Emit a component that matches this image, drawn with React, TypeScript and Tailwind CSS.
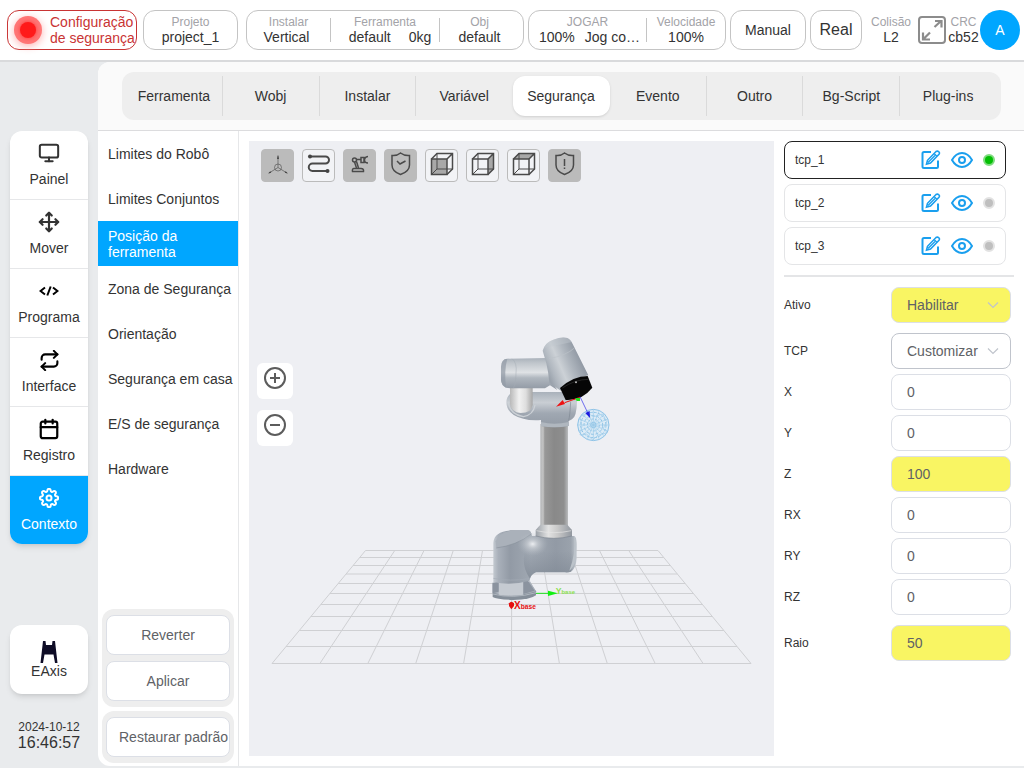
import { useState } from "react"
import type { ReactNode } from "react"
import { FiCalendar, FiMonitor, FiMove, FiRepeat, FiSettings } from "react-icons/fi"

const TABS = ["Ferramenta", "Wobj", "Instalar", "Variável", "Segurança", "Evento", "Outro", "Bg-Script", "Plug-ins"]

const SAFETY_MENU = [
  "Limites do Robô",
  "Limites Conjuntos",
  "Posição da ferramenta",
  "Zona de Segurança",
  "Orientação",
  "Segurança em casa",
  "E/S de segurança",
  "Hardware",
]

const NAV = [
  { label: "Painel", icon: <MonitorIcon /> },
  { label: "Mover", icon: <FiMove size={22} strokeWidth={2.4} /> },
  { label: "Programa", icon: <CodeIcon /> },
  { label: "Interface", icon: <FiRepeat size={21} strokeWidth={2.4} className="text-black" /> },
  { label: "Registro", icon: <FiCalendar size={22} strokeWidth={2.4} className="text-black" /> },
  { label: "Contexto", icon: <FiSettings size={20} strokeWidth={2.4} /> },
]

const POSE_FIELDS = [
  { id: "x", label: "X", value: "0", changed: false },
  { id: "y", label: "Y", value: "0", changed: false },
  { id: "z", label: "Z", value: "100", changed: true },
  { id: "rx", label: "RX", value: "0", changed: false },
  { id: "ry", label: "RY", value: "0", changed: false },
  { id: "rz", label: "RZ", value: "0", changed: false },
]

function MonitorIcon() {
  return <FiMonitor size={22} strokeWidth={2.2} />
}

function CodeIcon() {
  return (
    <svg width="20" height="12" viewBox="0 0 20 12" fill="none" stroke="#000" strokeWidth="2">
      <path d="M6 2.5 1.5 6 6 9.5M14 2.5 18.500 6 14 9.500M11.700 1.500 8.300 10.500" />
    </svg>
  )
}

function ExpandIcon() {
  return (
    <svg width="30" height="30" viewBox="0 0 30 30" fill="none" stroke="#8c8c8c" strokeWidth="2">
      <rect x="2" y="2" width="26" height="26" rx="3" />
      <path d="M17.500 12 24 6M18 6H24.500V12.500M13 17.500 6.500 24M6 17.500V24.500H13" strokeWidth="2.200" />
    </svg>
  )
}

function EditIcon() {
  return (
    <svg width="20" height="20" viewBox="0 0 20 20" fill="none" stroke="#1a9fee" strokeWidth="2">
      <path d="M10 2H3Q1.500 2 1.500 3.500V16.500Q1.500 18 3 18H15.500Q17 18 17 16.500V10.500" />
      <path d="M5.500 14.200 6.500 10.300 15 1.500Q16.500 .500 17.800 1.800 19 3 18 4.300L9.500 13Z" strokeWidth="1.600" />
      <path d="M7 12.500 14 5.500M13 3.500 16 6.300" strokeWidth="1.300" />
    </svg>
  )
}

function EyeIcon() {
  return (
    <svg width="22" height="16" viewBox="0 0 22 16" fill="none" stroke="#1a9fee" strokeWidth="2">
      <path d="M1 8Q5 1 11 1T21 8Q17 15 11 15T1 8Z" />
      <circle cx="11" cy="8" r="3" />
    </svg>
  )
}

function CubeIcon({ face }: { face: string }) {
  return (
    <>
      <path d={face} fill="#a8a8a8" stroke="none" />
      <rect x="6.500" y="10" width="15.500" height="15.500" />
      <rect x="12" y="4.500" width="15.500" height="15.500" strokeWidth="1" />
      <path d="M6.500 10 12 4.500H27.500V20L22 25.500M22 10 27.500 4.500" />
      <path d="M6.500 25.500 12 20" strokeWidth="1" />
    </>
  )
}

const SHIELD = "M16.500 4Q13 7 8 6.500V16Q8 22.500 16.500 25.500 25.500 22.500 25.500 16V6.500Q20.500 7 16.500 4Z"

const VIEW_TOOLS: { label: string; active: boolean; icon: ReactNode }[] = [
  {
    label: "Eixos",
    active: true,
    icon: (
      <g strokeWidth=".600">
        <path d="M17 18.500V7M17 18.500 8 24M17 18.500 26 24" />
        <circle cx="17" cy="18.500" r="3.500" />
        <path d="M17 5.500 18 10H16ZM7 24.500 9.300 22.300 10.300 23.800ZM27 24.500 24.700 22.300 23.700 23.800Z" fill="#444" stroke="none" />
      </g>
    ),
  },
  {
    label: "Trajetória",
    active: false,
    icon: (
      <>
        <path d="M8 7.500H23.500A3.500 3.500 0 0 1 23.500 14.500H10.500A3.700 3.700 0 0 0 10.500 22H25" strokeWidth="2" />
        <circle cx="8" cy="7.500" r="2" fill="#444" stroke="none" />
        <circle cx="25.500" cy="22" r="2" fill="#444" stroke="none" />
      </>
    ),
  },
  {
    label: "Robô",
    active: true,
    icon: (
      <>
        <path d="M9.500 22.500Q9 19.500 11 19.500H18Q21 19.500 20.500 22.500Z" />
        <circle cx="11.500" cy="11" r="2" />
        <path d="M11.500 13 13.500 19M13.500 12.500 15.500 19M13.500 10.500H18" />
        <path d="M18 8.500H21V13.500H18ZM25 7.500Q21.500 8 21.500 11T25 14" />
      </>
    ),
  },
  { label: "Zona segura", active: true, icon: <path d={SHIELD + "M13 12 16 15 21.500 12"} /> },
  { label: "Vista frontal", active: false, icon: <CubeIcon face="M6.500 10H22V25.500H6.500Z" /> },
  { label: "Vista lateral", active: false, icon: <CubeIcon face="M22 10 27.500 4.500V20L22 25.500Z" /> },
  { label: "Vista superior", active: false, icon: <CubeIcon face="M6.500 10 12 4.500H27.500L22 10Z" /> },
  { label: "Alerta", active: true, icon: <path d={SHIELD + "M16.500 10V17M16.500 18.500V20"} /> },
]

// y of every grid row, far to near
const GRID_ROWS = [550.5, 557.5, 565.5, 574, 583.5, 593.5, 604.5, 616.5, 630.5, 646.5, 663.5]

function FloorGrid() {
  const far = GRID_ROWS[0]
  const near = GRID_ROWS[10]
  return (
    <g stroke="#cfd0d3" strokeWidth="1" fill="none">
      {GRID_ROWS.map((y, i) => {
        const t = (y - far) / (near - far)
        return (
          <g key={y}>
            <line x1={365.5 - 93.5 * t} x2={658 + 93 * t} y1={y} y2={y} />
            <line x1={365.5 + 29.25 * i} y1={far} x2={272 + 47.9 * i} y2={near} />
          </g>
        )
      })}
    </g>
  )
}

function RobotArm() {
  return (
    <g transform="translate(470 320) scale(.33333)">
      <defs>
        <linearGradient id="body" x1="0" x2="1">
          <stop offset="0" stopColor="#c3c9d0" />
          <stop offset=".06" stopColor="#a9b0ba" />
          <stop offset=".2" stopColor="#929aa5" />
          <stop offset=".45" stopColor="#a0a8b2" />
          <stop offset=".75" stopColor="#929aa5" />
          <stop offset=".93" stopColor="#9aa2ac" />
          <stop offset="1" stopColor="#c3c9d0" />
        </linearGradient>
        <linearGradient id="shade" x1="0" x2="0" y1="0" y2="1">
          <stop offset=".35" stopColor="#7d8692" stopOpacity="0" />
          <stop offset="1" stopColor="#7d8692" stopOpacity=".7" />
        </linearGradient>
        <linearGradient id="tube" x1="0" x2="1">
          <stop offset="0" stopColor="#b4b6b8" />
          <stop offset=".1" stopColor="#c3c3c3" />
          <stop offset=".16" stopColor="#989898" />
          <stop offset=".5" stopColor="#898989" />
          <stop offset=".85" stopColor="#8e8e8e" />
          <stop offset="1" stopColor="#b9bbbd" />
        </linearGradient>
        <linearGradient id="collar" x1="0" x2="1">
          <stop offset="0" stopColor="#9ba1a8" />
          <stop offset=".35" stopColor="#e2e2e2" />
          <stop offset=".6" stopColor="#c9c9c9" />
          <stop offset="1" stopColor="#9298a0" />
        </linearGradient>
        <linearGradient id="arm" x1="0" x2="0" y1="0" y2="1">
          <stop offset="0" stopColor="#a9b1ba" />
          <stop offset=".15" stopColor="#bfc5cb" />
          <stop offset=".45" stopColor="#dfe2e5" />
          <stop offset=".62" stopColor="#b0b7bf" />
          <stop offset="1" stopColor="#8f97a2" />
        </linearGradient>
        <linearGradient id="elbow" x1="0" x2="0" y1="0" y2="1">
          <stop offset="0" stopColor="#a9b1ba" />
          <stop offset=".3" stopColor="#c9ced4" />
          <stop offset=".6" stopColor="#a0a8b2" />
          <stop offset="1" stopColor="#929aa5" />
        </linearGradient>
        <linearGradient id="link" x1="0" x2="1">
          <stop offset="0" stopColor="#b9b9b9" />
          <stop offset=".4" stopColor="#f1f1f1" />
          <stop offset=".7" stopColor="#dedede" />
          <stop offset="1" stopColor="#a6a6a6" />
        </linearGradient>
        <linearGradient id="wrist" gradientUnits="userSpaceOnUse" x1="228" y1="150" x2="330" y2="106">
          <stop offset="0" stopColor="#9aa2ac" />
          <stop offset=".15" stopColor="#b0b7bf" />
          <stop offset=".4" stopColor="#ccd1d6" />
          <stop offset=".65" stopColor="#b0b7bf" />
          <stop offset="1" stopColor="#8f97a2" />
        </linearGradient>
        <radialGradient id="shine">
          <stop offset="0" stopColor="#eceef1" />
          <stop offset=".35" stopColor="#d3d7dc" stopOpacity=".6" />
          <stop offset="1" stopColor="#b0b7bf" stopOpacity="0" />
        </radialGradient>
      </defs>

      {/* base */}
      <path d="M68 788H180L198 814V826Q184 838 130 840 80 838 68 831Z" fill="#858e99" />
      <path d="M68 788V818Q130 836 198 814L180 784Z" fill="#a9b0ba" />
      <path d="M86 780H160V824Q122 830 86 824Z" fill="#c5cad1" />
      <path d="M68 790 86 784V815L68 820ZM160 784 172 780 194 812 160 822Z" fill="#8b939f" />
      <path d="M68 822Q130 838 198 818" stroke="#c3c9d0" strokeWidth="2" fill="none" />

      {/* shoulder */}
      <path
        d="M70 668C72 644 92 631 130 631H172Q183 631 186 648H312Q320 650 320 672V715Q318 745 303 755 295 758 285 757H198Q180 764 179 782 122 798 70 786Z"
        fill="url(#body)"
      />
      <path d="M186 648H312Q320 690 303 755 295 758 285 757H198Q184 762 180 776 140 720 186 648Z" fill="url(#shade)" />
      <path d="M77 664Q88 636 130 631H172Q183 632 184 642 140 676 79 684Z" fill="#aab1ba" />
      <path d="M79 684Q140 676 184 642" stroke="#88919c" strokeWidth="2" fill="none" />
      <ellipse cx="188" cy="672" rx="46" ry="36" fill="url(#shine)" />
      <path d="M312 650Q319 652 319 680L317 718Q312 742 298 752 318 700 312 650Z" fill="#bcc3ca" />
      <path d="M70 775Q120 785 178 776" stroke="#a4acb6" strokeWidth="2" fill="none" />

      {/* lower arm */}
      <path d="M211 312H294V622H211Z" fill="url(#tube)" />
      <path d="M211 614H292L306 630V648Q252 662 197 648V630Z" fill="url(#collar)" />
      <path d="M199 632Q252 644 304 632" stroke="#e6e6e6" strokeWidth="2" fill="none" />
      <path d="M197 648Q252 662 306 648" stroke="#7e8791" strokeWidth="2" fill="none" />

      {/* elbow */}
      <path
        d="M109 248Q109 216 145 216H310Q322 216 321 245 320 290 306 298L296 303V318Q252 326 213 318V300Q180 302 160 296 111 284 109 248Z"
        fill="url(#elbow)"
      />
      <path d="M213 306V318Q252 326 296 318V306Q252 316 213 306Z" fill="#b0b7bf" />
      <path d="M115 245Q118 282 160 290 190 285 195 255" stroke="#ccd1d6" strokeWidth="4" fill="none" />
      <path d="M302 245Q300 285 296 302" stroke="#7f8893" strokeWidth="2" fill="none" />
      <path d="M120 195H188V255Q184 279 152 279 124 277 120 252Z" fill="url(#link)" />

      {/* upper arm */}
      <path d="M93 140Q94 117 112 116L232 114 250 192 262 210 240 196 225 205H120L108 203Q94 196 93 180Z" fill="url(#arm)" />
      <path d="M93 140Q94 117 112 116 102 150 108 203 94 196 93 180Z" fill="#929aa5" fillOpacity=".7" />
      <path d="M126 116Q142 128 138 160 138 190 130 205" stroke="#a4acb5" strokeWidth="1.500" fill="none" />

      {/* wrist and flange */}
      <path d="M218 92Q224 68 250 59 276 49 292 54 302 58 308 72L355 166Q305 175 272 212L238 188Q236 160 229 130Z" fill="url(#wrist)" />
      <path d="M222 84Q228 66 250 59 276 49 292 54 300 57 306 66 260 76 222 84Z" fill="#c2c8ce" fillOpacity=".45" />
      <path d="M238 116Q290 106 313 84" stroke="#bcc2c9" strokeWidth="2" fill="none" />
      <path d="M270 204Q310 168 353 168L367 203Q335 243 287 240Z" fill="#060606" />
      <path d="M277 204Q315 178 356 178" stroke="#333" strokeWidth="2" fill="none" />
      <circle cx="318" cy="187" r="3" fill="#bbb" />

      {/* tool sphere */}
      <circle cx="370" cy="315" r="48" fill="#dcebf6" />
      <g fill="none" stroke="#8fc3e6" strokeWidth="3">
        <circle cx="370" cy="315" r="47" />
        <circle cx="370" cy="315" r="38" strokeDasharray="8 4" />
        <circle cx="370" cy="315" r="28" strokeDasharray="9 5" />
        <circle cx="370" cy="315" r="18" strokeDasharray="7 4" />
        <circle cx="370" cy="315" r="8" />
      </g>
      <g fill="none" stroke="#9ccae9" strokeWidth="2">
        <path d="M323 315H417M370 268V362M337 282 403 348M403 282 337 348M327 297 413 333M413 297 327 333M352 272 388 358M388 272 352 358" />
        <path d="M330 290 352 280 372 290 398 282 410 305 400 325 412 338 385 345 368 360 350 342 330 345 336 318Z" />
      </g>

      {/* tool frame */}
      <path d="M330 232 284 248" stroke="#e11" strokeWidth="3" />
      <path d="M258 260 278 240 285 252Z" fill="#e11" />
      <path d="M316 234H330V243H320Z" fill="#1ee01e" />
      <path d="M330 230 354 280" stroke="#2b2bea" strokeWidth="2" />
      <path d="M360 294 346 279 359 273Z" fill="#1a1ae0" />

      {/* base frame */}
      <path d="M198 820H240" stroke="#1ee01e" strokeWidth="3" />
      <path d="M234 812 264 820 234 828Z" fill="#10f010" />
      <text x="257" y="822" fontSize="26" fontFamily="Liberation Sans, Arial, sans-serif" fill="#8be04e" fontWeight="700">
        Y<tspan fontSize="18">base</tspan>
      </text>
      <path d="M117 850Q124 840 132 850V858L124 868 117 858Z" fill="#e60f0f" />
      <text x="132" y="866" fontSize="30" fontFamily="Liberation Sans, Arial, sans-serif" fill="#e60f0f" fontWeight="700">
        X<tspan fontSize="20">base</tspan>
      </text>
    </g>
  )
}

function Info({ label, className = "", children }: { label: string; className?: string; children: ReactNode }) {
  return (
    <div className={`flex flex-col items-center text-sm leading-4 whitespace-nowrap text-[#333] ${className}`}>
      <span className="text-xs leading-[14px] text-[#a3a3a8]">{label}</span>
      {children}
    </div>
  )
}

function Header() {
  return (
    <header className="flex h-[62px] shrink-0 items-center gap-2 border-b-2 border-[#d9dadc] bg-white pr-1 pl-[7px]">
      <div className="flex gap-1.5">
        <button className="flex h-10 w-[130px] items-center gap-2 rounded-xl border border-[#c93434] pl-1.5 text-left text-sm leading-4 text-[#c93434]">
          <span className="flex size-7 shrink-0 items-center justify-center rounded-full bg-[#ff7676] shadow-[0_2px_8px_#ffb0b0]">
            <span className="size-4 rounded-full bg-[#ff1a1a] shadow-[0_0_4px_#ff3030]" />
          </span>
          <span className="whitespace-nowrap">
            Configuração
            <br />
            de segurança
          </span>
        </button>
        <div className="flex h-10 w-[95px] items-center justify-center rounded-xl border border-[#c4c4c4]">
          <Info label="Projeto">project_1</Info>
        </div>
      </div>

      <div className="flex gap-1">
        <div className="flex h-10 w-[278px] items-center rounded-xl border border-[#c4c4c4]">
          <Info label="Instalar" className="w-[83px]">
            <span className="pr-1">Vertical</span>
          </Info>
          <span className="h-6 w-px bg-[#c4c4c4]" />
          <Info label="Ferramenta" className="w-[108px]">
            <span className="flex gap-[18px] pl-2.5">
              <span>default</span>
              <span>0kg</span>
            </span>
          </Info>
          <span className="h-6 w-px bg-[#c4c4c4]" />
          <Info label="Obj" className="flex-1 pr-1">
            default
          </Info>
        </div>
        <div className="flex h-10 w-[198px] items-center rounded-xl border border-[#c4c4c4]">
          <Info label="JOGAR" className="w-[117px]">
            <span className="flex gap-2.5 pl-1">
              <span>100%</span>
              <span>Jog co…</span>
            </span>
          </Info>
          <span className="h-6 w-px bg-[#c4c4c4]" />
          <Info label="Velocidade" className="flex-1">
            100%
          </Info>
        </div>
        <button className="h-10 w-[76px] rounded-xl border border-[#c4c4c4] text-sm text-[#333]">Manual</button>
        <button className="h-10 w-[52px] rounded-xl border border-[#c4c4c4] text-base text-[#333]">Real</button>
      </div>

      <div className="ml-auto flex items-center">
        <Info label="Colisão" className="pr-1.5">
          L2
        </Info>
        <button aria-label="Tela cheia">
          <ExpandIcon />
        </button>
        <Info label="CRC" className="w-[33px]">
          cb52
        </Info>
        <button className="size-10 rounded-full bg-[#00a6ff] text-sm text-white">A</button>
      </div>
    </header>
  )
}

function Sidebar() {
  return (
    <aside className="flex w-[98px] shrink-0 flex-col px-2.5 pt-[69px] pb-[17px]">
      <nav className="divide-y divide-[#e6e7e9] overflow-hidden rounded-xl bg-white shadow-md">
        {NAV.map((item) => (
          <button
            key={item.label}
            className={`flex h-[69px] w-full flex-col items-center justify-center gap-1 text-sm leading-5 last:h-[68px] ${
              item.label === "Contexto" ? "bg-[#00a6ff] text-white" : "text-[#333]"
            }`}
          >
            <span className="flex h-6 items-center">{item.icon}</span>
            {item.label}
          </button>
        ))}
      </nav>
      <button className="mt-auto flex h-[69px] flex-col items-center justify-center rounded-xl bg-white text-sm leading-4 text-[#333] shadow-md">
        <svg width="18" height="22" viewBox="0 0 18 22" fill="#0e0c26">
          <path d="M3 0H5.500L6 4H12L12.500 0H15L17.500 22H15L13.500 13.500H4.500L3 22H.500Z" />
        </svg>
        <span>EAxis</span>
      </button>
      <div className="pt-[25px] text-center text-xs leading-4 text-[#333]">
        2024-10-12
        <div className="text-base leading-4">16:46:57</div>
      </div>
    </aside>
  )
}

function SafetyMenu() {
  const [selected, setSelected] = useState("Posição da ferramenta")
  const button = "h-10 w-full rounded-lg border border-[#dcdfe6] bg-white text-sm whitespace-nowrap text-[#606266]"
  return (
    <div className="flex w-[141px] shrink-0 flex-col border-r border-[#e6e7e9]">
      {SAFETY_MENU.map((item) => (
        <button
          key={item}
          onClick={() => setSelected(item)}
          className={`h-[45px] pl-2.5 text-left text-sm leading-4 ${
            item === selected ? "bg-[#00a6ff] text-white" : "text-[#333]"
          }`}
        >
          {item}
        </button>
      ))}
      <div className="mt-auto flex flex-col gap-1 px-1 pb-[3px]">
        <div className="flex flex-col gap-1.5 rounded-xl bg-[#eeeeee] px-1 py-1.5">
          <button className={button}>Reverter</button>
          <button className={button}>Aplicar</button>
        </div>
        <div className="rounded-xl bg-[#eeeeee] px-1 py-1.5">
          <button className={`${button} pl-3 text-left`}>Restaurar padrão</button>
        </div>
      </div>
    </div>
  )
}

function Viewer() {
  return (
    <div className="relative flex flex-1 flex-col bg-[#eeeff3]">
      <svg className="absolute inset-0 h-full w-full" viewBox="249 141 525 615">
        <FloorGrid />
        <RobotArm />
      </svg>
      <div className="relative flex gap-2 px-3 pt-2">
        {VIEW_TOOLS.map((tool) => (
          <button
            key={tool.label}
            aria-label={tool.label}
            className={`size-[33px] rounded-sm border border-[#bbbbbb] ${tool.active ? "bg-[#bbbbbb]" : "bg-[#f2f3f6]"}`}
          >
            <svg className="-m-px" width="33" height="33" viewBox="0 0 33 33" fill="none" stroke="#4a4a4a" strokeWidth="1.500">
              {tool.icon}
            </svg>
          </button>
        ))}
      </div>
      <div className="relative flex flex-1 flex-col gap-[11px] px-2 pt-[181px]">
        <button aria-label="Aumentar zoom" className="flex h-9 w-9 justify-center rounded-md bg-white pt-[3px]">
          <svg width="24" height="24" viewBox="0 0 24 24" fill="none" stroke="#5c5c5c" strokeWidth="2">
            <circle cx="12" cy="12" r="10" />
            <path d="M7 12H17M12 7V17" />
          </svg>
        </button>
        <button aria-label="Diminuir zoom" className="flex h-9 w-9 justify-center rounded-md bg-white pt-[3px]">
          <svg width="24" height="24" viewBox="0 0 24 24" fill="none" stroke="#5c5c5c" strokeWidth="2">
            <circle cx="12" cy="12" r="10" />
            <path d="M7 12H17" />
          </svg>
        </button>
      </div>
    </div>
  )
}

function TcpRow({ name, active }: { name: string; active: boolean }) {
  return (
    <div
      className={`flex h-[38px] items-center rounded-lg border pr-2.5 pl-2.5 text-xs text-[#333] ${
        active ? "border-[#222]" : "border-[#e4e5e7]"
      }`}
    >
      <span className="flex-1">{name}</span>
      <span className="flex items-center gap-2.5">
        <button aria-label={`Editar ${name}`}>
          <EditIcon />
        </button>
        <button aria-label={`Mostrar ${name}`}>
          <EyeIcon />
        </button>
        <span
          className={`size-3 rounded-full border-2 ${active ? "border-[#7fdc7f] bg-[#05bf05]" : "border-[#e2e2e2] bg-[#bfbfbf]"}`}
        />
      </span>
    </div>
  )
}

function SelectField({ id, label, value, changed }: { id: string; label: string; value: string; changed: boolean }) {
  return (
    <div className="flex items-center justify-between text-xs text-[#333]">
      <label htmlFor={id}>{label}</label>
      <div className="relative w-[120px]">
        <select
          id={id}
          defaultValue={value}
          className={`block h-9 w-full appearance-none rounded-lg border pl-[15px] text-sm text-[#606266] ${
            changed ? "border-[#dcdfe6] bg-[#f9f563]" : "border-[#c0c4cc] bg-white"
          }`}
        >
          <option>{value}</option>
        </select>
        <svg
          className="pointer-events-none absolute top-3.5 right-3"
          width="12"
          height="8"
          viewBox="0 0 12 8"
          fill="none"
          stroke="#c0c4cc"
          strokeWidth="1.200"
        >
          <path d="M1 1.500 6 6.500 11 1.500" />
        </svg>
      </div>
    </div>
  )
}

function NumberField({ id, label, value, changed }: { id: string; label: string; value: string; changed: boolean }) {
  return (
    <div className="flex items-center justify-between text-xs text-[#333]">
      <label htmlFor={id}>{label}</label>
      <input
        id={id}
        type="text"
        defaultValue={value}
        className={`h-9 w-[120px] rounded-lg border border-[#dcdfe6] px-[15px] text-sm text-[#606266] ${
          changed ? "bg-[#f9f563]" : "bg-white"
        }`}
      />
    </div>
  )
}

function ToolPositionPanel() {
  return (
    <div className="w-[230px] shrink-0">
      <div className="flex flex-col gap-[5px] pr-2">
        <TcpRow name="tcp_1" active />
        <TcpRow name="tcp_2" active={false} />
        <TcpRow name="tcp_3" active={false} />
      </div>
      <form className="mt-2.5 flex flex-col gap-2.5 border-t-2 border-[#e4e5e7] pt-2.5 pr-[3px]">
        <SelectField id="ativo" label="Ativo" value="Habilitar" changed />
        <div className="flex flex-col gap-[5px]">
          <SelectField id="tcp" label="TCP" value="Customizar" changed={false} />
          {POSE_FIELDS.map((field) => (
            <NumberField key={field.id} {...field} />
          ))}
        </div>
        <NumberField id="raio" label="Raio" value="50" changed />
      </form>
    </div>
  )
}

export default function App() {
  const [tab, setTab] = useState("Segurança")
  return (
    <div className="flex min-h-screen flex-col bg-[#e9ebed] font-['Liberation_Sans',Arial,sans-serif]">
      <Header />
      <div className="flex flex-1">
        <Sidebar />
        <main className="mb-0.5 flex flex-1 flex-col overflow-hidden rounded-l-xl bg-white">
          <div className="border-b border-[#dcdcde] bg-[#fafafa] py-2.5 pr-[23px] pl-6">
            <div className="grid grid-cols-9 rounded-xl bg-[#eeeeee] p-1">
              {TABS.map((name, i) => (
                <button
                  key={name}
                  onClick={() => setTab(name)}
                  className={`h-10 border-r text-sm text-[#333] last:border-transparent ${
                    name === tab
                      ? "rounded-xl border-transparent bg-white shadow-sm"
                      : TABS[i + 1] === tab
                        ? "border-transparent"
                        : "border-[#dadada]"
                  }`}
                >
                  {name}
                </button>
              ))}
            </div>
          </div>
          <div className="flex flex-1">
            <SafetyMenu />
            <div className="flex flex-1 gap-2.5 p-2.5">
              <Viewer />
              <ToolPositionPanel />
            </div>
          </div>
        </main>
      </div>
    </div>
  )
}
